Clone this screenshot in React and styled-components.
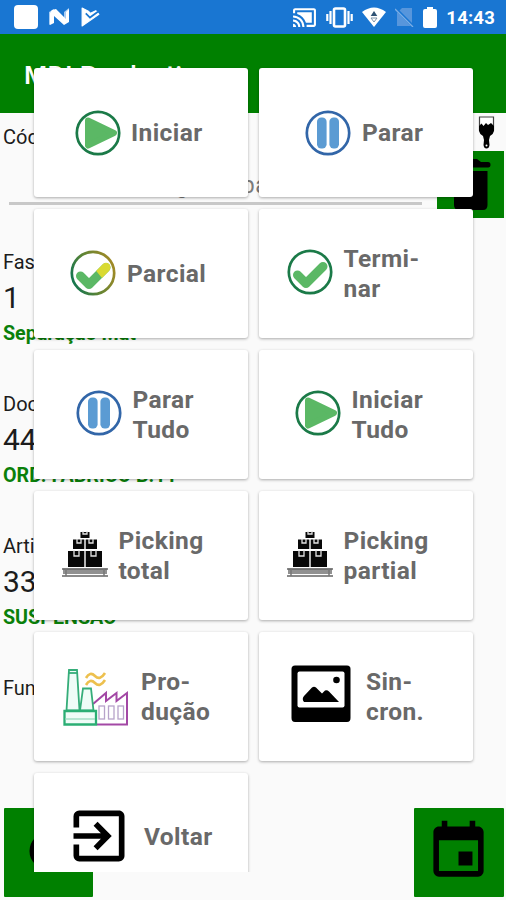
import React from 'react';
import styled, { createGlobalStyle } from 'styled-components';
import { MdEvent, MdExitToApp, MdCastConnected } from 'react-icons/md';

const GlobalStyle = createGlobalStyle`
  * {
    box-sizing: border-box;
  }

  body {
    margin: 0;
    background: #fafafa;
    font-family: Roboto, 'Liberation Sans', sans-serif;
  }
`;

const Screen = styled.div`
  position: relative;
  width: 506px;
  height: 900px;
  overflow: hidden;
  display: flex;
  flex-direction: column;
  background: #fafafa;
  color: #1c1c1c;
`;

const StatusBar = styled.div`
  height: 34px;
  flex-shrink: 0;
  display: flex;
  align-items: center;
  justify-content: space-between;
  padding: 0 11px 0 14px;
  background: #1976d2;
  color: #fff;
`;

const StatusGroup = styled.div`
  display: flex;
  align-items: center;
  gap: ${({ $gap }) => $gap}px;

  svg {
    display: block;
  }
`;

const Notification = styled.span`
  width: 24px;
  height: 24px;
  border-radius: 4px;
  background: #fff;
`;

const Clock = styled.span`
  font-size: 18.5px;
  font-weight: 700;
  letter-spacing: 0.2px;
  line-height: 34px;
  padding-top: 2px;
`;

const AppBar = styled.header`
  height: 79px;
  flex-shrink: 0;
  display: flex;
  align-items: center;
  padding: 1px 24px 0;
  background: #008000;
  color: #fff;
  font-size: 26.5px;
  font-weight: 500;
  letter-spacing: 0.3px;
`;

const CodeSection = styled.section`
  height: 137px;
  flex-shrink: 0;
`;

const CodeHeader = styled.div`
  height: 38px;
  display: flex;
  justify-content: space-between;
  padding: 3px 11px 0 3px;
`;

const Label = styled.div`
  font-size: 20px;
  line-height: 24px;
  padding-top: ${({ $top = 0 }) => $top}px;
`;

const CodeRow = styled.div`
  display: flex;
  justify-content: space-between;
  padding: 0 2px 0 9px;
`;

const CodeInput = styled.div`
  width: 413px;
  height: 54px;
  padding: 22px 0 0 80px;
  border-bottom: 3px solid #c8c8c8;
  color: #7b7b7b;
  font-size: 23px;
  line-height: 26px;
  letter-spacing: 0.6px;
  white-space: nowrap;
`;

const ClearButton = styled.button`
  width: 67px;
  height: 67px;
  padding: 0;
  border: 0;
  background: #008000;
`;

const Field = styled.section`
  height: 142px;
  flex-shrink: 0;
  padding: 0 3px;

  &:last-of-type {
    height: auto;
  }
`;

const FieldValue = styled.div`
  font-size: 30px;
  line-height: 36px;
  margin-top: 6px;
`;

const FieldNote = styled.div`
  color: #0a800a;
  font-size: 19.7px;
  font-weight: 700;
  line-height: 24px;
  margin-top: 6px;
`;

const BottomBar = styled.footer`
  margin-top: auto;
  flex-shrink: 0;
  display: flex;
  justify-content: space-between;
  padding: 0 2px 3px 4px;
`;

const SquareButton = styled.button`
  width: ${({ $width = 89 }) => $width}px;
  height: 89px;
  display: flex;
  align-items: center;
  justify-content: center;
  padding: 0 2px 3px 0;
  border: 0;
  border-radius: 1px;
  background: #008000;
  color: #000;
`;

/* Action menu shown over the form, cut off where it starts to scroll */
const Menu = styled.div`
  position: absolute;
  top: 65px;
  left: 30px;
  width: 450px;
  height: 807px;
  padding: 3px 4px 0;
  overflow: hidden;
  display: grid;
  grid-template-columns: 214px 214px;
  grid-auto-rows: 129px;
  gap: 12px 11px;
  align-content: start;
`;

const Card = styled.button`
  display: flex;
  align-items: center;
  gap: ${({ $gap }) => $gap}px;
  padding: 0 0 0 ${({ $inset }) => $inset}px;
  border: 0;
  border-radius: 3px;
  background: #fff;
  box-shadow: 0 1px 3px rgba(0, 0, 0, 0.32);
  color: #696969;
  font-family: inherit;
  font-size: 24.5px;
  font-weight: 700;
  line-height: 29.5px;
  letter-spacing: 0.4px;
  text-align: left;

  svg {
    display: block;
    flex-shrink: 0;
    margin-bottom: ${({ $lift = 0 }) => $lift * 2}px;
  }
`;

const CardText = styled.span`
  white-space: pre-line;
  padding-bottom: ${({ $raise = 0 }) => $raise}px;
`;

const PlayIcon = () => (
  <svg width="46" height="46" viewBox="0 0 46 46">
    <circle cx="23" cy="23" r="21.2" fill="#fff" stroke="#1b7a48" strokeWidth="2.7" />
    <path d="M13 10.5L39 23L13 35.5Z" fill="#5bb865" stroke="#5bb865" strokeWidth="6" strokeLinejoin="round" />
  </svg>
);

const PauseIcon = () => (
  <svg width="46" height="46" viewBox="0 0 46 46">
    <circle cx="23" cy="23" r="21.2" fill="#fff" stroke="#3266a8" strokeWidth="2.7" />
    <rect x="12" y="7.5" width="9.6" height="31" rx="4.2" fill="#5b9bd3" />
    <rect x="24.4" y="7.5" width="9.6" height="31" rx="4.2" fill="#5b9bd3" />
  </svg>
);

const CheckIcon = ({ partial }) => (
  <svg width="46" height="46" viewBox="0 0 46 46">
    <defs>
      <linearGradient id="ring" x1="0" y1="0.75" x2="1" y2="0.35">
        <stop offset="0" stopColor="#0f7551" />
        <stop offset="0.45" stopColor="#5d8435" />
        <stop offset="1" stopColor="#a08a26" />
      </linearGradient>
    </defs>
    <circle cx="23" cy="23" r="21.2" fill="#fff" stroke={partial ? 'url(#ring)' : '#1b7a48'} strokeWidth="2.7" />
    <path d="M10.5 26L19 34.5L36 17.5" fill="none" stroke="#5bb865" strokeWidth="9" strokeLinecap="round" strokeLinejoin="round" />
    {partial && <path d="M26.2 20.9L33 14Q36 11.5 39.5 14.3Q41.5 18 39 21L32 28Z" fill="#d9da32" />}
  </svg>
);

const PickingIcon = () => (
  <svg width="46" height="46" viewBox="0 0 46 46">
    <path d="M18.5 1H27.5V7H18.5ZM11 8.5H22.3V18H11ZM23.7 8.5H35V18H23.7ZM6 20H22.3V36H6ZM23.7 20H40V36H23.7Z" fill="#080808" />
    <path d="M21 0V3H25V0M15 8V12H19V8M27 8V12H31V8M12 19V25H17V19M29 19V25H34V19" fill="none" stroke="#e4e4e4" strokeWidth="1.3" />
    <path d="M1 37.5H45V43H1Z" fill="#919191" />
    <path d="M0 38H46M0 45H46" stroke="#666" strokeWidth="1.5" />
    <path d="M4 38V45M42 38V45" stroke="#777" strokeWidth="1.5" />
  </svg>
);

const FactoryIcon = () => (
  <svg width="66" height="58" viewBox="0 0 66 58" fill="none" strokeWidth="1.8">
    <g stroke="#b7a3ca" strokeWidth="1.3">
      <rect x="36" y="38" width="5.5" height="13" />
      <rect x="45.5" y="38" width="5.5" height="13" />
      <rect x="55" y="38" width="5.5" height="13" />
    </g>
    <path d="M30 36L43 25V33L53.5 25V33L64 25V56.5H34" stroke="#a348a5" strokeWidth="2" />
    <path d="M3.5 42.5L6 2H14L16.5 42.5Z" fill="#effcf7" stroke="#35ad79" />
    <path d="M5.5 5H14.5" stroke="#35ad79" />
    <path d="M17 42.5L20 20.5H28L30.5 42.5Z" fill="#effcf7" stroke="#35ad79" />
    <path d="M1.5 43H33V56.5H1.5Z" fill="#effcf7" stroke="#2bae74" strokeWidth="2.3" />
    <path d="M2 51H32" stroke="#91d8b9" strokeWidth="1.2" />
    <path d="M23 10Q27 3 32 8T42 5M23 17Q27 10 32 15T42 12" stroke="#edc04e" strokeWidth="2.6" />
  </svg>
);

const PhotoIcon = () => (
  <svg width="60" height="58" viewBox="0 0 60 58">
    <path d="M4 .5H56Q59.5 .5 59.5 4V53Q59.5 57 56 57H4Q.5 57 .5 53V4Q.5 .5 4 .5Z" fill="#000" />
    <rect x="6.5" y="6.5" width="47" height="36" rx="2" fill="#fff" />
    <circle cx="45.5" cy="15" r="3.3" />
    <path d="M13 37Q10.5 34 13 31L21 22.5Q23 21 25 22.5L31 28.5L34 25.5Q36 24.5 38 26.5L48 37Z" />
  </svg>
);

const BrushIcon = () => (
  <svg width="17" height="33" viewBox="0 0 17 33">
    <path d="M1.5 1H15.5V14H1.5Z" fill="#fff" stroke="#444" strokeWidth="1.2" />
    <path d="M1 10L3.5 7.5L5.5 10L8 7L10 9L13 7L16 10V15Q15.5 18 12 20L11 24L11.5 29Q11 32.5 8.5 32.5Q6 32.5 5.5 29L6 24L5 20Q1.5 18 1 15Z" fill="#000" />
    <circle cx="8.5" cy="29.5" r="1" fill="#fff" />
  </svg>
);

const TrashIcon = () => (
  <svg width="67" height="67" viewBox="0 0 67 67">
    <path d="M27 8H40L44 11H51Q53.5 11 53.5 13.8T51 16.5H16Q13.5 16.5 13.5 13.8T16 11H23ZM17 20H50.5V54Q50.5 59 46 59H22Q17 59 17 54Z" fill="#000" />
  </svg>
);

const ClockIcon = () => (
  <svg width="38" height="38" viewBox="0 0 38 38" fill="none" stroke="#000" strokeWidth="5">
    <circle cx="19" cy="19" r="16" />
    <path d="M19 9V20L26 24" />
  </svg>
);

const NougatIcon = () => (
  <svg width="21" height="18" viewBox="0 0 21 18">
    <path d="M0 4L5 1V14L0 17ZM15 4L20 0V13L15 16Z" fill="#a9cdf3" />
    <path d="M3 2L7 1L17 11V4L20 1V14L15 17L5 8V15L1 17V5Z" fill="#fff" />
  </svg>
);

const PlayCheckIcon = () => (
  <svg width="19" height="20" viewBox="0 0 18 19">
    <path d="M1 1L7 4L9 6L14 3.5L17 7L1 18Z" fill="#fff" stroke="#fff" strokeLinejoin="round" />
    <path d="M4.5 6L8.5 10L16 4.5" fill="none" stroke="#1976d2" strokeWidth="1.6" />
  </svg>
);

const VibrateIcon = () => (
  <svg width="27" height="21" viewBox="0 0 27 21" fill="none" stroke="#fff">
    <rect x="8" y="1.5" width="11" height="18" rx="1.5" strokeWidth="2.6" />
    <path d="M4.5 4V17M22.5 4V17M1.3 7V14M25.7 7V14" strokeWidth="2.2" />
  </svg>
);

const WifiIcon = () => (
  <svg width="24" height="20" viewBox="0 0 24 20">
    <path d="M0 5Q12-4 24 5L12 20Z" fill="#fff" />
    <path d="M12 4L15.3 9H8.7Z" fill="#2f5274" />
    <path d="M12 15L9 11H15Z" fill="none" stroke="#7d93a8" />
  </svg>
);

const NoSimIcon = () => (
  <svg width="19" height="20" viewBox="0 0 19 20">
    <path d="M7 1H17V19H2V6Z" fill="#5796dc" />
    <path d="M1 2L18 19" stroke="#1976d2" strokeWidth="3" />
    <path d="M0 2L18 20" stroke="#7baee5" strokeWidth="1.3" />
  </svg>
);

const BatteryIcon = () => (
  <svg width="14" height="21" viewBox="0 0 14 21">
    <path d="M4 0H10V2H12Q14 2 14 4V19Q14 21 12 21H2Q0 21 0 19V4Q0 2 2 2H4Z" fill="#fff" />
  </svg>
);

const fields = [
  { label: 'Fase', value: '1', note: 'Separação Mat' },
  { label: 'Documento', value: '44', note: 'ORD. FABRICO B.11' },
  { label: 'Artigo', value: '33', note: 'SUSPENSAO' },
];

const actions = [
  { text: 'Iniciar', icon: <PlayIcon />, inset: 40.5, gap: 10.5 },
  { text: 'Parar', icon: <PauseIcon />, inset: 46, gap: 11 },
  { text: 'Parcial', icon: <CheckIcon partial />, inset: 36, gap: 11, lift: 0.5 },
  { text: 'Termi-\nnar', icon: <CheckIcon />, inset: 27.5, gap: 11, lift: 2 },
  { text: 'Parar\nTudo', icon: <PauseIcon />, inset: 42, gap: 10.5, lift: 2 },
  { text: 'Iniciar\nTudo', icon: <PlayIcon />, inset: 36, gap: 10.5, lift: 2 },
  { text: 'Picking\ntotal', icon: <PickingIcon />, inset: 28, gap: 10.5, lift: 2 },
  { text: 'Picking\npartial', icon: <PickingIcon />, inset: 28, gap: 10.5, lift: 2 },
  { text: 'Pro-\ndução', icon: <FactoryIcon />, inset: 29, gap: 12 },
  { text: 'Sin-\ncron.', icon: <PhotoIcon />, inset: 32, gap: 15, lift: 3 },
  { text: 'Voltar', icon: <MdExitToApp size={68} color="#000" />, inset: 31, gap: 11, lift: 2, raise: 2 },
];

function App() {
  return (
    <Screen>
      <GlobalStyle />
      <StatusBar>
        <StatusGroup $gap={11}>
          <Notification />
          <NougatIcon />
          <PlayCheckIcon />
        </StatusGroup>
        <StatusGroup $gap={9}>
          <MdCastConnected size={25} />
          <VibrateIcon />
          <WifiIcon />
          <NoSimIcon />
          <BatteryIcon />
          <Clock>14:43</Clock>
        </StatusGroup>
      </StatusBar>

      <AppBar>MDI Production</AppBar>

      <CodeSection>
        <CodeHeader>
          <Label $top={9}>Código</Label>
          <BrushIcon />
        </CodeHeader>
        <CodeRow>
          <CodeInput>Ler código de barras</CodeInput>
          <ClearButton>
            <TrashIcon />
          </ClearButton>
        </CodeRow>
      </CodeSection>

      {fields.map((field) => (
        <Field key={field.label}>
          <Label>{field.label}</Label>
          <FieldValue>{field.value}</FieldValue>
          <FieldNote>{field.note}</FieldNote>
        </Field>
      ))}
      <Field>
        <Label>Funcionário</Label>
      </Field>

      <BottomBar>
        <SquareButton>
          <ClockIcon />
        </SquareButton>
        <SquareButton $width={90}>
          <MdEvent size={67} />
        </SquareButton>
      </BottomBar>

      <Menu>
        {actions.map((action) => (
          <Card key={action.text} $inset={action.inset} $gap={action.gap} $lift={action.lift}>
            {action.icon}
            <CardText $raise={action.raise}>{action.text}</CardText>
          </Card>
        ))}
      </Menu>
    </Screen>
  );
}

export default App;
